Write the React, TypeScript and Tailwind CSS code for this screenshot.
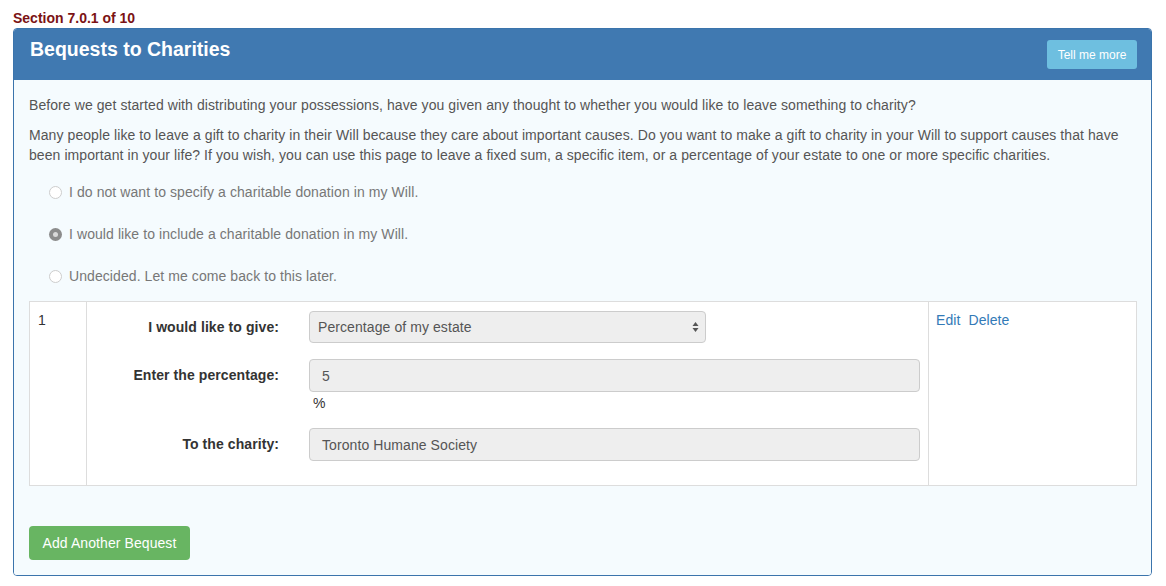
import React from 'react';

const Radio = ({ checked, label }: { checked?: boolean; label: string }) => (
  <div className="flex items-center h-5 pl-[20px]">
    {checked ? (
      <span className="w-[13px] h-[13px] rounded-full bg-[#8c8c8c] flex items-center justify-center">
        <span className="w-[5px] h-[5px] rounded-full bg-[#d9d9d9]" />
      </span>
    ) : (
      <span className="w-[13px] h-[13px] rounded-full border border-[#cdcdcd] bg-white" />
    )}
    <span className="ml-[7px] text-[#777]">{label}</span>
  </div>
);

const Field = ({ label, children }: { label: string; children: React.ReactNode }) => (
  <div className="flex items-start">
    <div className="w-[192px] text-right font-bold text-[#333] pt-[6px]">{label}</div>
    <div className="ml-[30px]">{children}</div>
  </div>
);

export default function App() {
  return (
    <div
      className="bg-white w-[1166px] h-[586px] text-[14px] leading-5 text-[#555] tracking-[0.08px]"
      style={{ fontFamily: '"Liberation Sans", Arial, sans-serif' }}
    >
      <div className="pl-[13px] pt-[8px] h-[28px] font-bold text-[#7b1214] tracking-normal">Section 7.0.1 of 10</div>

      <div className="mx-[13px] w-[1139px] border border-[#3b74ac] rounded-[4px] overflow-hidden">
        {/* header */}
        <div className="bg-[#4079b1] h-[51px] flex items-start justify-between px-[16px]">
          <h2 className="text-white font-bold text-[19.5px] leading-6 pt-[8px] tracking-normal">Bequests to Charities</h2>
          <button className="mt-[11px] mr-[-2px] w-[90px] h-[29px] rounded-[3px] bg-[#6ebfe0] text-white text-[12px] tracking-normal">
            Tell me more
          </button>
        </div>

        {/* body */}
        <div className="bg-[#f5fbfe] px-[15px] pt-[15px] pb-[15px]">
          <p className="mb-[10px]">
            Before we get started with distributing your possessions, have you given any thought to whether you would like to leave something to charity?
          </p>
          <p>
            Many people like to leave a gift to charity in their Will because they care about important causes. Do you want to make a gift to charity in your Will to support causes that have been important in your life? If you wish, you can use this page to leave a fixed sum, a specific item, or a percentage of your estate to one or more specific charities.
          </p>

          <div className="mt-[17px] flex flex-col gap-[22px]">
            <Radio label="I do not want to specify a charitable donation in my Will." />
            <Radio checked label="I would like to include a charitable donation in my Will." />
            <Radio label="Undecided. Let me come back to this later." />
          </div>

          {/* bequest table */}
          <div className="mt-[15px] w-[1108px] h-[185px] border border-[#dddddd] bg-white flex">
            <div className="w-[57px] border-r border-[#dddddd] px-[8px] pt-[8px] text-[#333]">1</div>
            <div className="w-[842px] border-r border-[#dddddd] pt-[9px] flex flex-col">
              <Field label="I would like to give:">
                <div className="w-[397px] h-[32px] rounded-[4px] border border-[#cccccc] bg-[#eeeeee] flex items-center justify-between pl-[8px] pr-[6px]">
                  <span>Percentage of my estate</span>
                  <svg width="7" height="12" viewBox="0 0 7 12">
                    <path d="M3.5 1 L6.5 5 H0.5 Z" fill="#555" />
                    <path d="M3.5 11 L6.5 7 H0.5 Z" fill="#555" />
                  </svg>
                </div>
              </Field>
              <div className="mt-[16px]">
                <Field label="Enter the percentage:">
                  <div className="w-[611px] h-[33px] rounded-[4px] border border-[#cccccc] bg-[#eeeeee] flex items-center px-[12px]">
                    5
                  </div>
                  <div className="pl-[4px] pt-[1px] text-[#333]">%</div>
                </Field>
              </div>
              <div className="mt-[15px]">
                <Field label="To the charity:">
                  <div className="w-[611px] h-[33px] rounded-[4px] border border-[#cccccc] bg-[#eeeeee] flex items-center px-[12px]">
                    Toronto Humane Society
                  </div>
                </Field>
              </div>
            </div>
            <div className="flex-1 px-[7px] pt-[8px] text-[#337ab7]">
              <span className="mr-[8px]">Edit</span>
              <span>Delete</span>
            </div>
          </div>

          <button className="mt-[40px] w-[161px] h-[34px] rounded-[4px] bg-[#68b562] text-white">
            Add Another Bequest
          </button>
        </div>
      </div>
    </div>
  );
}
